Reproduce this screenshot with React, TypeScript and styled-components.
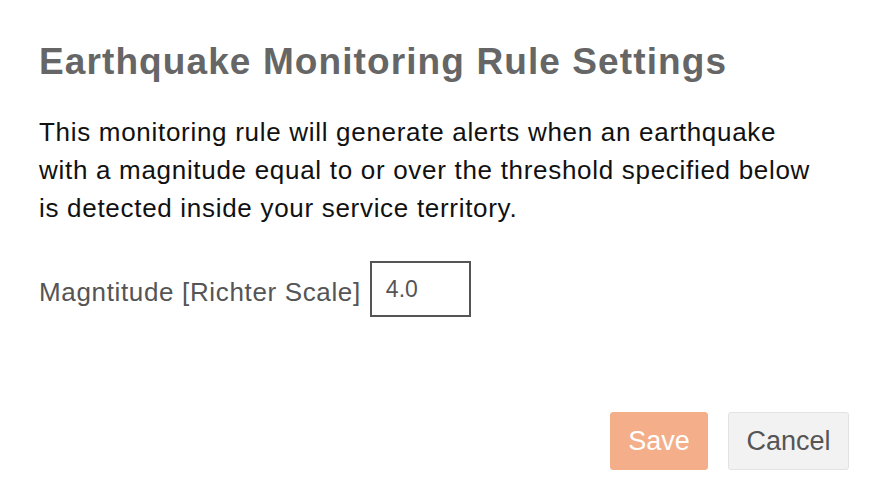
import React from "react";
import styled, { createGlobalStyle } from "styled-components";

const Global = createGlobalStyle`
  html, body { margin: 0; padding: 0; background: #fff; }
  body { font-family: "Liberation Sans", Arial, sans-serif; }
`;

const Dialog = styled.div`
  width: 881px;
  height: 490px;
  box-sizing: border-box;
  padding: 39px 32px 20px 39px;
  display: flex;
  flex-direction: column;
`;

const Title = styled.h1`
  margin: 0;
  font-size: 37px;
  line-height: 46px;
  font-weight: 700;
  letter-spacing: 1.1px;
  color: #666;
`;

const Description = styled.p`
  margin: 28px 0 0;
  font-size: 26px;
  line-height: 38px;
  letter-spacing: 0.7px;
  color: #111;
  width: 782px;
`;

const FieldRow = styled.div`
  display: flex;
  align-items: center;
  gap: 9px;
  margin-top: 34px;
`;

const Label = styled.label`
  font-size: 26px;
  letter-spacing: 0.65px;
  color: #555;
  padding-top: 6px;
`;

const Input = styled.input`
  box-sizing: border-box;
  width: 101px;
  height: 56px;
  border: 2px solid #555;
  border-radius: 0;
  padding: 0 14px;
  font-family: "Liberation Sans", Arial, sans-serif;
  font-size: 23px;
  color: #555;
  outline: none;
`;

const Footer = styled.div`
  margin-top: auto;
  display: flex;
  justify-content: flex-end;
  gap: 20px;
`;

const Button = styled.button<{ $primary?: boolean }>`
  box-sizing: border-box;
  height: 58px;
  padding: 0;
  width: ${(p) => (p.$primary ? "98px" : "121px")};
  font-family: "Liberation Sans", Arial, sans-serif;
  font-size: 27px;
  border-radius: 3px;
  border: 1px solid ${(p) => (p.$primary ? "#f4ae8a" : "#e2e2e2")};
  background: ${(p) => (p.$primary ? "#f4ae8a" : "#f2f2f2")};
  color: ${(p) => (p.$primary ? "#fff" : "#555")};
  cursor: pointer;
`;

export default function App() {
  return (
    <>
      <Global />
      <Dialog>
        <Title>Earthquake Monitoring Rule Settings</Title>
        <Description>
          This monitoring rule will generate alerts when an earthquake with a
          magnitude equal to or over the threshold specified below is detected
          inside your service territory.
        </Description>
        <FieldRow>
          <Label htmlFor="mag">Magntitude [Richter Scale]</Label>
          <Input id="mag" defaultValue="4.0" />
        </FieldRow>
        <Footer>
          <Button $primary>Save</Button>
          <Button>Cancel</Button>
        </Footer>
      </Dialog>
    </>
  );
}
